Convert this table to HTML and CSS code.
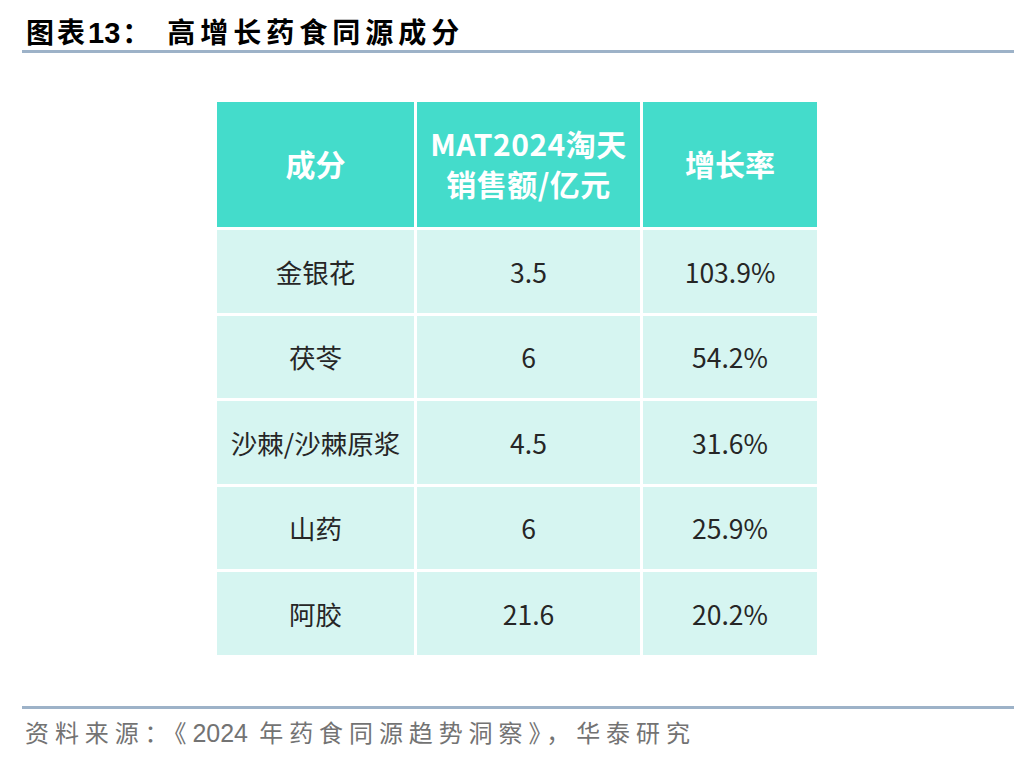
FILE: index.html
```html
<!DOCTYPE html>
<html lang="zh">
<head>
<meta charset="utf-8">
<link rel="stylesheet" href="styles.css">
</head>
<body>
<div class="page">
  <div class="title"><span class="t1">图表</span><span class="num">13</span><span class="colon">：</span><span class="t2">高增长药食同源成分</span></div>
  <div class="rule"></div>
  <div class="table-wrap">
    <div class="grid">
      <div class="cell head">成分</div>
      <div class="cell head two">MAT2024淘天<br>销售额/亿元</div>
      <div class="cell head">增长率</div>

      <div class="cell">金银花</div>
      <div class="cell">3.5</div>
      <div class="cell">103.9%</div>

      <div class="cell">茯苓</div>
      <div class="cell">6</div>
      <div class="cell">54.2%</div>

      <div class="cell">沙棘/沙棘原浆</div>
      <div class="cell">4.5</div>
      <div class="cell">31.6%</div>

      <div class="cell">山药</div>
      <div class="cell">6</div>
      <div class="cell">25.9%</div>

      <div class="cell">阿胶</div>
      <div class="cell">21.6</div>
      <div class="cell">20.2%</div>
    </div>
  </div>
  <div class="rule foot-rule"></div>
  <div class="source">资料来源：《<span class="digits">2024</span> 年药食同源趋势洞察》，华泰研究</div>
</div>
</body>
</html>
```

FILE: styles.css
```css
html, body {
  margin: 0;
  padding: 0;
  background: #ffffff;
}
.page {
  width: 1036px;
  height: 760px;
  display: flex;
  flex-direction: column;
  overflow: hidden;
}
.title {
  margin: 15px 0 0 26px;
  height: 32px;
  line-height: 32px;
  font-family: "Noto Sans CJK SC", sans-serif;
  font-weight: 700;
  font-size: 28px;
  color: #000;
  white-space: nowrap;
}
.title .t1 {
  letter-spacing: 3px;
}
.title .num {
  font-family: "Liberation Sans", Arial, sans-serif;
  font-weight: 700;
  font-size: 29px;
}
.title .colon {
  margin-left: 2px;
}
.title .t2 {
  margin-left: 17px;
  letter-spacing: 5px;
}
.rule {
  margin: 3px 22px 0 22px;
  height: 3px;
  background: #9db2c8;
}
.table-wrap {
  display: flex;
  justify-content: flex-start;
  padding-left: 217px;
  margin-top: 49px;
}
.grid {
  display: grid;
  grid-template-columns: 197px 223px 174px;
  grid-template-rows: 125px repeat(5, 82.5px);
  gap: 3px 3px;
}
.cell {
  background: #d6f5f1;
  display: flex;
  align-items: center;
  justify-content: center;
  text-align: center;
  font-family: "Noto Sans CJK SC", sans-serif;
  font-size: 26.5px;
  color: #262626;
}
.cell.head {
  background: #44dccb;
  color: #ffffff;
  font-weight: 700;
  font-size: 30px;
  line-height: 40px;
  padding-bottom: 4px;
}
.cell.head.two {
  letter-spacing: 0.5px;
}
.foot-rule {
  margin-top: 51px;
}
.source {
  margin: 8px 0 0 25px;
  font-family: "Noto Sans CJK SC", sans-serif;
  font-size: 24px;
  line-height: 30px;
  letter-spacing: 5.9px;
  color: #737373;
  white-space: nowrap;
}
.source .digits {
  font-family: "Liberation Sans", Arial, sans-serif;
  font-size: 25px;
  letter-spacing: 0;
}
```
